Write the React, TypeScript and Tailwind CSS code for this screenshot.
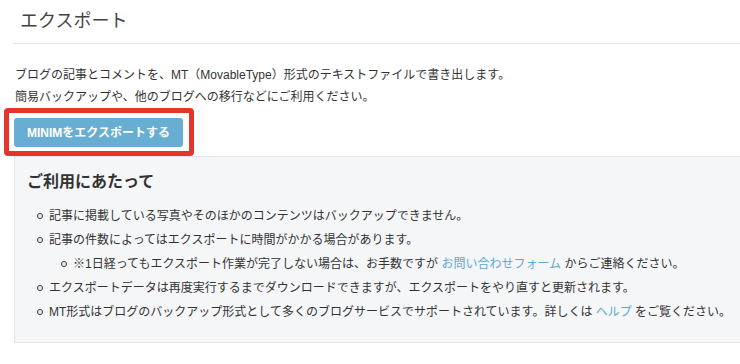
import React from "react";

const font = { fontFamily: '"Liberation Sans", "Noto Sans CJK JP", sans-serif' };

function Bullet() {
  return <span className="mt-[9px] mr-[6px] inline-block h-[6px] w-[6px] shrink-0 rounded-full border-[1.5px] border-[#333]" />;
}

function Item({ children, nested = false }: { children: React.ReactNode; nested?: boolean }) {
  return (
    <li className={`flex h-[24px] items-start leading-[24px] ${nested ? "pl-[34px]" : "pl-[10px]"}`}>
      <Bullet />
      <span>{children}</span>
    </li>
  );
}

export default function App() {
  return (
    <div className="w-[740px] overflow-hidden bg-white text-[#333]" style={font}>
      <div className="pl-[13px]">
        <div className="border-b border-[#e3e3e3] pb-[8px] pl-[7px] pt-[8px]">
          <h1 className="text-[18px] leading-[27px] text-[#444]">エクスポート</h1>
        </div>
        <div className="pl-[2px] pt-[20px] text-[12px] leading-[22px]">
          <p>ブログの記事とコメントを、MT（MovableType）形式のテキストファイルで書き出します。</p>
          <p>簡易バックアップや、他のブログへの移行などにご利用ください。</p>
        </div>
        <div className="pl-[1px] pt-[10px]">
          <div className="relative w-[169px]">
            <button className="h-[29px] w-[169px] rounded-[3px] bg-[#68add2] text-[12px] font-bold text-white">
              MINIMをエクスポートする
            </button>
            <span className="pointer-events-none absolute -bottom-[9px] -left-[10px] -right-[11px] -top-[10px] rounded-[4px] border-[5px] border-[#e5352b]" />
          </div>
        </div>
        <div className="ml-[1px] mt-[9px] border border-r-0 border-[#e3e5e8] bg-[#f5f6f8] pb-[18px] pl-[12px] pt-[13px] text-[12px]">
          <h2 className="text-[16px] font-bold leading-[24px] text-[#333]">ご利用にあたって</h2>
          <ul className="mt-[10px]">
            <Item>記事に掲載している写真やそのほかのコンテンツはバックアップできません。</Item>
            <Item>記事の件数によってはエクスポートに時間がかかる場合があります。</Item>
            <Item nested>
              ※1日経ってもエクスポート作業が完了しない場合は、お手数ですが <span className="text-[#5ea7d4]">お問い合わせフォーム</span> からご連絡ください。
            </Item>
            <Item>エクスポートデータは再度実行するまでダウンロードできますが、エクスポートをやり直すと更新されます。</Item>
            <Item>
              MT形式はブログのバックアップ形式として多くのブログサービスでサポートされています。詳しくは <span className="text-[#5ea7d4]">ヘルプ</span> をご覧ください。
            </Item>
          </ul>
        </div>
      </div>
    </div>
  );
}
